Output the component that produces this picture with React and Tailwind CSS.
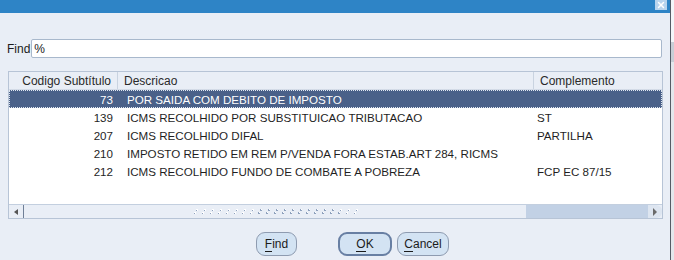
import { X } from 'lucide-react'

const rows = [
  { code: 73, desc: 'POR SAIDA COM DEBITO DE IMPOSTO', comp: '' },
  { code: 139, desc: 'ICMS RECOLHIDO POR SUBSTITUICAO TRIBUTACAO', comp: 'ST' },
  { code: 207, desc: 'ICMS RECOLHIDO DIFAL', comp: 'PARTILHA' },
  { code: 210, desc: 'IMPOSTO RETIDO EM REM P/VENDA FORA ESTAB.ART 284, RICMS', comp: '' },
  { code: 212, desc: 'ICMS RECOLHIDO FUNDO DE COMBATE A POBREZA', comp: 'FCP EC 87/15' },
]

const grip = Array.from({ length: 21 })

function Btn({ children, def, w }) {
  return (
    <div
      className={`h-[24px] ${w} flex items-center justify-center rounded-[9px] bg-[#d3e3f3] text-[12px] text-[#1b1b1b] ${
        def ? 'border-2 border-[#687fa3]' : 'border border-[#8e9bb0]'
      }`}
    >
      {children}
    </div>
  )
}

export default function App() {
  return (
    <div className="flex w-[674px] h-[260px] overflow-hidden bg-[#e9edf4] font-['Liberation_Sans',Arial,sans-serif]">
      {/* dialog */}
      <div className="w-[670px] h-full flex flex-col bg-[#e9eef6]">
        {/* title bar */}
        <div className="h-[13px] bg-[#2e84c6] flex justify-end pr-[3px]">
          <div className="w-[12px] h-[10px] bg-[#b8d4ee] flex items-center justify-center">
            <X size={10} strokeWidth={3.5} color="#ffffff" />
          </div>
        </div>

        {/* find row */}
        <div className="flex items-center mt-[26px] pl-[7px] pr-[7px]">
          <span className="text-[12px] text-[#1b1b1b] leading-none">Find</span>
          <div className="ml-[1px] w-[631px] h-[19px] bg-white border border-[#a8b8cc] rounded-[2px] flex items-center pl-[2px] text-[12px] text-[#1b1b1b]">
            %
          </div>
        </div>

        {/* table */}
        <div className="ml-[8px] mt-[13px] w-[655px] h-[148px] border border-[#b7c4d6] bg-white flex flex-col">
          <div className="h-[18px] flex bg-[#e9eef6] border-b border-[#d3dbe7] text-[12px] text-[#2a2a2a]">
            <div className="w-[109px] border-r border-[#c9d3e0] text-right pr-[6px] leading-[18px]">Codigo Subtítulo</div>
            <div className="w-[416px] border-r border-[#c9d3e0] pl-[6px] leading-[18px]">Descricao</div>
            <div className="flex-1 pl-[6px] leading-[18px]">Complemento</div>
          </div>
          <div className="flex-1 flex flex-col">
            {rows.map((r, i) => (
              <div
                key={r.code}
                className={`h-[18px] flex text-[11.6px] leading-[17px] ${
                  i === 0 ? 'bg-[#4a6189] text-white border border-dotted border-[#dfe6f0]' : 'text-[#1f1f1f] border border-transparent'
                }`}
              >
                <div className="w-[103px] text-right">{r.code}</div>
                <div className="w-[416px] pl-[14px] whitespace-nowrap">{r.desc}</div>
                <div className="flex-1 pl-[8px]">{r.comp}</div>
              </div>
            ))}
          </div>
          {/* horizontal scrollbar */}
          <div className="h-[14px] flex border-t border-[#c3cfdf] bg-[#e9eef6]">
            <div className="w-[15px] flex items-center justify-center border-r border-[#6f7f96] rounded-l-[6px]">
              <div className="w-0 h-0 border-y-[3px] border-y-transparent border-r-[4px] border-r-[#555]" />
            </div>
            <div className="w-[502px] flex items-center pl-[170px] bg-[#e9eef6]">
              <div className="flex flex-col gap-[1px]">
                <div className="flex gap-[6px] pl-[2px]">
                  {grip.map((_, k) => (
                    <div key={k} className="w-[2px] h-[2px] bg-[linear-gradient(45deg,#8ea1bd_50%,#ffffff_50%)]" />
                  ))}
                </div>
                <div className="flex gap-[6px]">
                  {grip.map((_, k) => (
                    <div key={k} className="w-[2px] h-[2px] bg-[linear-gradient(45deg,#8ea1bd_50%,#ffffff_50%)]" />
                  ))}
                </div>
              </div>
            </div>
            <div className="flex-1 bg-[#c2d1e5]" />
            <div className="w-[14px] bg-[#dde5f0] rounded-r-[6px] flex items-center justify-center">
              <div className="w-0 h-0 border-y-[4px] border-y-transparent border-l-[4px] border-l-[#6a6a6a]" />
            </div>
          </div>
        </div>

        {/* buttons */}
        <div className="flex mt-[13px] pl-[256px] items-center">
          <Btn w="w-[41px]"><span><span className="border-b border-[#1b1b1b] leading-[12px]">F</span>ind</span></Btn>
          <div className="ml-[41px]">
            <Btn def w="w-[54px]"><span><span className="border-b border-[#1b1b1b] leading-[12px]">O</span>K</span></Btn>
          </div>
          <div className="ml-[5px]">
            <Btn w="w-[52px]"><span><span className="border-b border-[#1b1b1b] leading-[12px]">C</span>ancel</span></Btn>
          </div>
        </div>
      </div>
      {/* right edge of window behind */}
      <div className="w-[1px] h-full bg-[#555c66]" />
      <div className="flex-1 h-full flex flex-col bg-[#dfe3ea]">
        <div className="h-[42px] bg-[#f4f6f9]" />
        <div className="h-[20px] bg-[#c9ced6]" />
        <div className="flex-1 bg-[#e4e7ec]" />
      </div>
    </div>
  )
}
